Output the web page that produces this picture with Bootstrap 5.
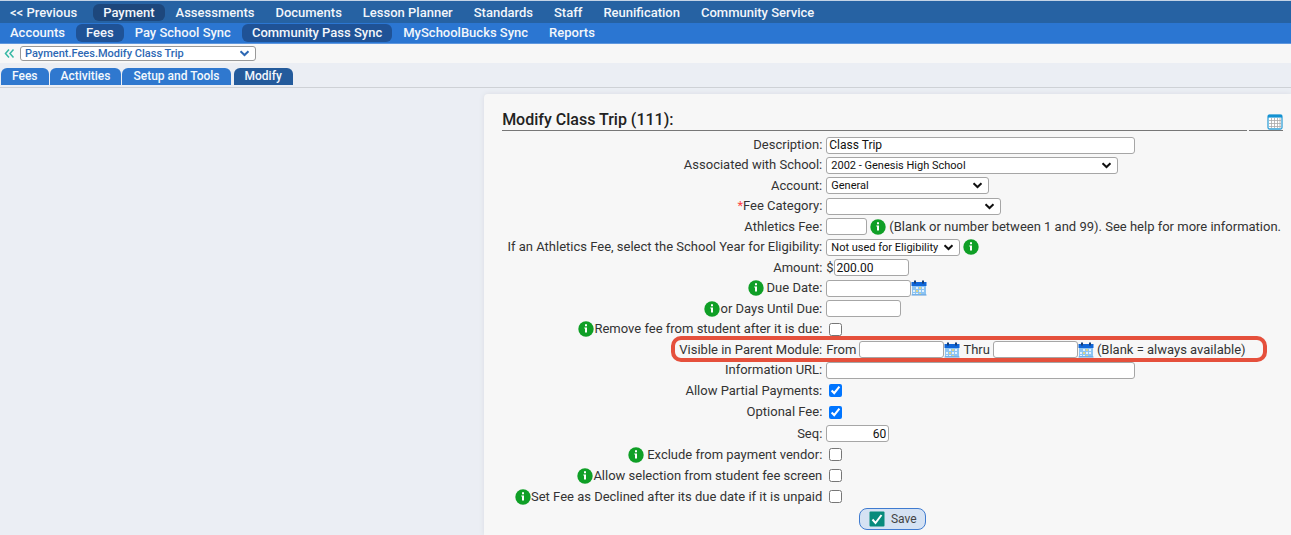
<!DOCTYPE html>
<html lang="en">
<head>
<meta charset="utf-8">
<meta name="viewport" content="width=device-width, initial-scale=1">
<title>Modify Class Trip</title>
<link href="https://cdn.jsdelivr.net/npm/bootstrap@5.3.0/dist/css/bootstrap.min.css" rel="stylesheet">
<style>
body{font:14px/16px Roboto,"Liberation Sans",sans-serif;color:#333;background:#ebeef4}
.bar{min-height:22px;padding:3px 0 2px;font-weight:500;background:#2662a3;line-height:17px}
.bar .nav-link{color:#f2f6fb;padding:0 10px;margin-right:1px;border-radius:6px;font-size:13px}
.bar .nav-link.active{background:#1d477c}
.bar-top{border-top:1px solid #c3d3e6}
.bar-top .nav-link:first-child{margin-right:6px}
.bar-sub{background:#2b76d2;min-height:21px;padding:1px 0;border-bottom:1px solid #5f97de;line-height:18px}
.bar-sub .nav-link.active{background:#1f5296}
.crumb{background:#f7f7f7;min-height:19px;padding:2px 4px;gap:5px}
.tabs{min-height:25px;padding:5px 1px 0;border-bottom:1px solid #ced1d6;align-items:flex-start}
.tabs .nav-link{background:#2f78cf;color:#f4f8fd;font-size:12px;font-weight:500;line-height:17px;padding:0 11px;border-radius:6px 6px 0 0;margin-right:1px}
.tabs .nav-link.active{background:#245b9c;margin-left:2px}
main{padding-top:6px}
.panel{width:62.5%;background:#f7f7f7;border-radius:4px 0 0 0;padding:16px 8px 4px 18px;box-shadow:0 0 5px #d9dce2}
.title{font-size:16px;line-height:20px;font-weight:500;color:#222;border-bottom:1px solid #777}
.tool{width:34px;border-bottom:1px solid #777;margin-left:2px}
.line{display:grid;grid-template-columns:41% 1fr;column-gap:4px;min-height:20px;align-items:center;white-space:nowrap;font-size:13px}
.line.tall{min-height:21px}
.line.roomy{min-height:22px}
.line.last{min-height:24px}
.line>div{display:flex;align-items:center}
.line>:first-child{justify-content:flex-end;text-align:right}
.box{height:17px;border:1px solid #a6a6a6;border-radius:3px;background-color:#fff;color:#111;font-size:12px;line-height:15px;padding:0 2px;min-width:0}
select.box{appearance:none;font-size:11px;padding:0 18px 0 4px;background-repeat:no-repeat;background-position:right 5px center;background-image:url("data:image/svg+xml,%3Csvg xmlns='http://www.w3.org/2000/svg' width='11' height='7'%3E%3Cpath d='M1.5 1.2L5.5 5L9.5 1.2' fill='none' stroke='%23111' stroke-width='2'/%3E%3C/svg%3E")}
.crumb select.box{color:#2d68b4;font-weight:500;width:236px;height:15px;line-height:13px;border-color:#999;background-image:url("data:image/svg+xml,%3Csvg xmlns='http://www.w3.org/2000/svg' width='11' height='7'%3E%3Cpath d='M1.5 1.2L5.5 5L9.5 1.2' fill='none' stroke='%232d68b4' stroke-width='2'/%3E%3C/svg%3E")}
.w-long{width:309px}.w-school{width:292px}.w-acct{width:163px}.w-cat{width:175px}.w-ath{width:41px}.w-elig{width:134px}
.w-date{width:85px}.w-amt{width:75px}.w-seq{width:63px}
.tick{width:13px;height:13px;margin:0 0 0 3px}
.ico{width:16px;height:16px;flex:none}
.gap-r{margin-right:3px}.gap-l{margin-left:3px}
.need{color:#f44}
.ring{position:absolute;left:169px;right:16px;top:-3px;bottom:-2px;border:4px solid #e5503c;border-radius:10px;pointer-events:none}
.save{background:#d5e2f3;border:1px solid #3f7bd0;border-radius:8px;height:22px;width:67px;font-size:12px;color:#444;gap:6px;margin-left:33px}
</style>
</head>
<body class="min-vh-100 d-flex flex-column">
<svg width="0" height="0" class="position-absolute" aria-hidden="true">
<symbol id="info" viewBox="0 0 16 16"><circle cx="8" cy="8" r="7.7" fill="#0f9f26"/><path d="M7 3.2h2v2H7zM6.3 6.6H9v5H7v-4h-.7z" fill="#fff"/></symbol>
<symbol id="cal" viewBox="0 0 16 16"><path d="M1 5h14v10H1z" fill="#8cc4f3"/><path d="M.5 2h15v4H.5z" fill="#0f66d8"/><path d="M3 .5h2v3H3zM11 .5h2v3h-2z" fill="#163f78"/><path d="M5 7h2v2H5zM8 7h2v2H8zM11 7h2v2h-2zM2 10h2v2H2zM8 10h2v2H8zM11 10h2v2h-2zM2 13h2v1H2zM5 13h2v1H5z" fill="#e2f1fe"/><path d="M8 7h2v2H8zM5 10h2v2H5zM8 13h2v1H8z" fill="#ddd68a"/><path d="M.5 15h15" stroke="#5e9edb"/></symbol>
</svg>
<nav class="nav bar bar-top">
<a class="nav-link" href="#">&lt;&lt; Previous</a><a class="nav-link active" href="#">Payment</a><a class="nav-link" href="#">Assessments</a><a class="nav-link" href="#">Documents</a><a class="nav-link" href="#">Lesson Planner</a><a class="nav-link" href="#">Standards</a><a class="nav-link" href="#">Staff</a><a class="nav-link" href="#">Reunification</a><a class="nav-link" href="#">Community Service</a>
</nav>
<nav class="nav bar bar-sub">
<a class="nav-link" href="#">Accounts</a><a class="nav-link active" href="#">Fees</a><a class="nav-link" href="#">Pay School Sync</a><a class="nav-link active" href="#">Community Pass Sync</a><a class="nav-link" href="#">MySchoolBucks Sync</a><a class="nav-link" href="#">Reports</a>
</nav>
<div class="crumb d-flex align-items-center">
<svg width="11" height="11" viewBox="0 0 11 11" aria-hidden="true"><path d="M5 1.5L1.5 5.5L5 9.5M9.5 1.5L6 5.5L9.5 9.5" fill="none" stroke="#37b8a4" stroke-width="1.5"/></svg>
<select class="box" aria-label="Page"><option>Payment.Fees.Modify Class Trip</option></select>
</div>
<nav class="nav tabs"><a class="nav-link" href="#">Fees</a><a class="nav-link" href="#">Activities</a><a class="nav-link" href="#">Setup and Tools</a><a class="nav-link active" href="#">Modify</a></nav>
<main class="flex-grow-1 d-flex justify-content-end">
<form class="panel">
<div class="d-flex mb-1"><h1 class="title flex-grow-1 m-0">Modify Class Trip (111):</h1><div class="tool d-flex justify-content-end align-items-end">
<svg class="ico" viewBox="0 0 16 16" aria-hidden="true"><rect x="1" y="1" width="14" height="14" rx="1.5" fill="#fff" stroke="#35a1d8" stroke-width="1.3"/><path d="M1 1h14v2.600H1z" fill="#1492d2"/><path d="M2 6.500h12M2 9.500h12M2 12.500h12M4.500 4v10M7.500 4v10M10.500 4v10M13 4v10" stroke="#aaa" stroke-width=".8"/></svg></div></div>
<div class="line"><label for="desc">Description:</label><div><input id="desc" class="box w-long" value="Class Trip"></div></div>
<div class="line"><label for="school">Associated with School:</label><div><select id="school" class="box w-school"><option>2002 - Genesis High School</option></select></div></div>
<div class="line tall"><label for="acct">Account:</label><div><select id="acct" class="box w-acct"><option>General</option></select></div></div>
<div class="line"><label for="cat"><span class="need">*</span>Fee Category:</label><div><select id="cat" class="box w-cat"><option></option></select></div></div>
<div class="line tall"><label for="ath">Athletics Fee:</label><div><input id="ath" class="box w-ath"><svg class="ico gap-l gap-r"><use href="#info"/></svg><span>(Blank or number between 1 and 99). See help for more information.</span></div></div>
<div class="line"><label for="elig">If an Athletics Fee, select the School Year for Eligibility:</label><div><select id="elig" class="box w-elig"><option>Not used for Eligibility</option></select><svg class="ico gap-l"><use href="#info"/></svg></div></div>
<div class="line tall"><label for="amt">Amount:</label><div><span>$</span><input id="amt" class="box w-amt" value="200.00"></div></div>
<div class="line"><div><svg class="ico gap-r"><use href="#info"/></svg><label for="due">Due Date:</label></div><div><input id="due" class="box w-date"><svg class="ico"><use href="#cal"/></svg></div></div>
<div class="line tall"><div><svg class="ico"><use href="#info"/></svg><label for="days">or Days Until Due:</label></div><div><input id="days" class="box w-amt"></div></div>
<div class="line"><div><svg class="ico"><use href="#info"/></svg><label for="rem">Remove fee from student after it is due:</label></div><div><input id="rem" type="checkbox" class="tick"></div></div>
<div class="line tall position-relative"><label for="from">Visible in Parent Module:</label><div><span class="gap-r">From</span><input id="from" class="box w-date"><svg class="ico gap-r"><use href="#cal"/></svg><label class="gap-r" for="thru">Thru</label><input id="thru" class="box w-date"><svg class="ico gap-r"><use href="#cal"/></svg><span>(Blank = always available)</span></div><span class="ring"></span></div>
<div class="line"><label for="url">Information URL:</label><div><input id="url" class="box w-long"></div></div>
<div class="line tall"><label for="part">Allow Partial Payments:</label><div><input id="part" type="checkbox" class="tick" checked></div></div>
<div class="line roomy"><label for="opt">Optional Fee:</label><div><input id="opt" type="checkbox" class="tick" checked></div></div>
<div class="line tall"><label for="seq">Seq:</label><div><input id="seq" class="box w-seq text-end" value="60"></div></div>
<div class="line tall"><div><svg class="ico gap-r"><use href="#info"/></svg><label for="excl">Exclude from payment vendor:</label></div><div><input id="excl" type="checkbox" class="tick"></div></div>
<div class="line tall"><div><svg class="ico"><use href="#info"/></svg><label for="sel">Allow selection from student fee screen</label></div><div><input id="sel" type="checkbox" class="tick"></div></div>
<div class="line tall"><div><svg class="ico"><use href="#info"/></svg><label for="decl">Set Fee as Declined after its due date if it is unpaid</label></div><div><input id="decl" type="checkbox" class="tick"></div></div>
<div class="line last"><span></span><div><button type="button" class="save d-flex align-items-center justify-content-center p-0"><svg class="ico" viewBox="0 0 16 16" aria-hidden="true"><rect x=".5" y=".5" width="15" height="15" rx="1" fill="#078b7c"/><path d="M3.5 8.500l3 3.500L12.500 4" fill="none" stroke="#fff" stroke-width="2"/></svg>Save</button></div></div>
</form>
</main>
<script src="https://cdn.jsdelivr.net/npm/bootstrap@5.3.0/dist/js/bootstrap.bundle.min.js"></script>
</body>
</html>
